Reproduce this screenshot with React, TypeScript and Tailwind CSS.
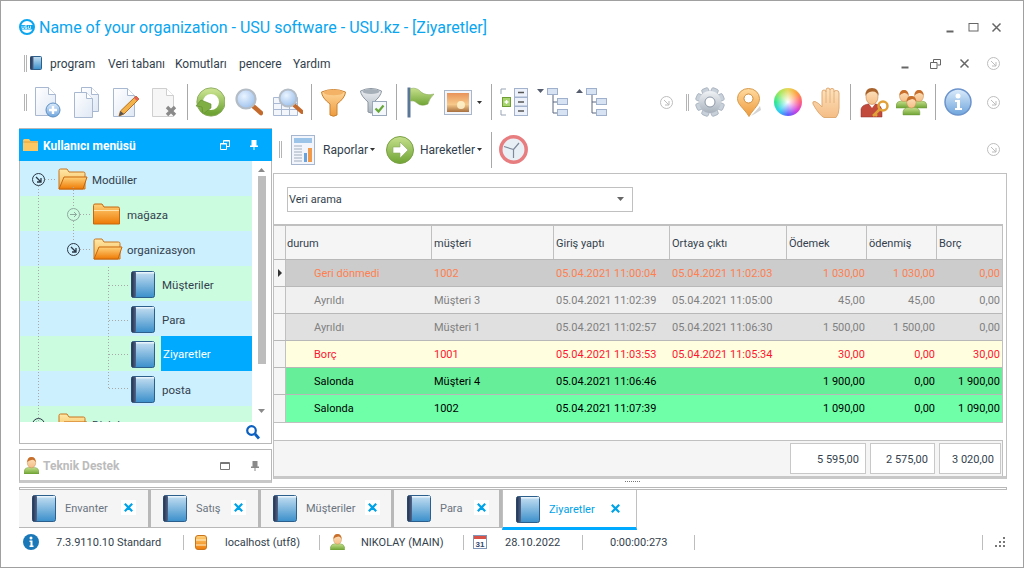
import React from "react";

const Defs = () => (
  <svg className="absolute w-0 h-0">
    <defs>
      <linearGradient id="book" x1="0" y1="0" x2="0" y2="1"><stop offset="0" stopColor="#c6e0f2" /><stop offset="1" stopColor="#3a8fcb" /></linearGradient>
      <linearGradient id="spine" x1="0" y1="0" x2="1" y2="0"><stop offset="0" stopColor="#22304d" /><stop offset="1" stopColor="#52668a" /></linearGradient>
      <linearGradient id="fold" x1="0" y1="0" x2="0" y2="1"><stop offset="0" stopColor="#ffd27a" /><stop offset="1" stopColor="#ee7a05" /></linearGradient>
      <linearGradient id="foldb" x1="0" y1="0" x2="0" y2="1"><stop offset="0" stopColor="#ffe9a8" /><stop offset="1" stopColor="#f3b14a" /></linearGradient>
      <linearGradient id="page" x1="0" y1="0" x2="1" y2="1"><stop offset="0" stopColor="#ffffff" /><stop offset="1" stopColor="#dfe8f5" /></linearGradient>
      <linearGradient id="green" x1="0" y1="0" x2="0" y2="1"><stop offset="0" stopColor="#c6e08c" /><stop offset="1" stopColor="#6fa435" /></linearGradient>
      <linearGradient id="orange" x1="0" y1="0" x2="0" y2="1"><stop offset="0" stopColor="#ffdba0" /><stop offset="1" stopColor="#ee9a3c" /></linearGradient>
      <linearGradient id="steel" x1="0" y1="0" x2="0" y2="1"><stop offset="0" stopColor="#f0f3f6" /><stop offset="1" stopColor="#a8b1bc" /></linearGradient>
      <linearGradient id="sky" x1="0" y1="0" x2="0" y2="1"><stop offset="0" stopColor="#dcecfb" /><stop offset="1" stopColor="#6fa5dd" /></linearGradient>
      <linearGradient id="sunset" x1="0" y1="0" x2="0" y2="1"><stop offset="0" stopColor="#e8935a" /><stop offset="0.6" stopColor="#f7c98a" /><stop offset="1" stopColor="#a8703f" /></linearGradient>
      <linearGradient id="skin" x1="0" y1="0" x2="0" y2="1"><stop offset="0" stopColor="#fde3c0" /><stop offset="1" stopColor="#f5bd85" /></linearGradient>
      <radialGradient id="lens" cx="0.4" cy="0.35" r="0.8"><stop offset="0" stopColor="#eaf4ff" /><stop offset="1" stopColor="#8fb8ea" /></radialGradient>
    </defs>
  </svg>
);

const Book = ({ className = "" }: { className?: string }) => (
  <svg className={`shrink-0 ${className}`} width="24" height="27" viewBox="0 0 24 27">
    <rect x="0.5" y="0.5" width="23" height="26" rx="2" fill="url(#book)" stroke="#2c5f8c" />
    <rect x="0.5" y="0.5" width="4.500" height="26" rx="1.500" fill="url(#spine)" />
    <rect x="5" y="1" width="18" height="1.500" fill="#e8f3fb" />
  </svg>
);

const FolderOpen = ({ className = "" }: { className?: string }) => (
  <svg className={`shrink-0 ${className}`} width="30" height="22" viewBox="0 0 30 22">
    <path d="M1 21V2.500Q1 1 2.500 1H9l2 3h14.500Q27 4 27 5.500V21Z" fill="url(#foldb)" stroke="#c8741c" />
    <path d="M1 21 6 9h23L25 21Z" fill="url(#fold)" stroke="#c8660c" />
  </svg>
);

const FolderClosed = ({ className = "" }: { className?: string }) => (
  <svg className={`shrink-0 ${className}`} width="27" height="22" viewBox="0 0 27 22">
    <path d="M0.500 21V2.500Q0.500 1 2 1H9l2 3h14Q26.500 4 26.500 5.500V21Z" fill="url(#fold)" stroke="#c8660c" />
    <path d="M1 7.500h25" stroke="#ffe3a8" />
  </svg>
);

const Arrow = ({ className = "", dark = false }: { className?: string; dark?: boolean }) => {
  const c = dark ? "#2a3644" : "#bdbdbd";
  return (
    <svg className={`shrink-0 ${className}`} width="13" height="13" viewBox="0 0 13 13" fill="none" stroke={c} strokeWidth="1">
      <circle cx="6.500" cy="6.500" r="6" />
      <path d="M4 4l5 5M9 5v4H5" strokeWidth={dark ? 1.300 : 1} />
    </svg>
  );
};

const Grip = ({ className = "" }: { className?: string }) => (
  <div className={`w-[3px] h-[17px] border-x border-[#b4b4b4] shrink-0 ${className}`} />
);

const PageBase = () => (
  <>
    <path d="M0.500 1.500h13l7 7v21h-20Z" fill="url(#page)" stroke="#a8b8d0" />
    <path d="M13.500 1.500v7h7" fill="#ffffff" stroke="#a8b8d0" />
  </>
);

const PagePlus = () => (
  <svg className="ml-[8px] shrink-0" width="26" height="32" viewBox="0 0 26 32">
    <PageBase />
    <circle cx="18" cy="24" r="7" fill="url(#sky)" stroke="#5d8fc2" />
    <path d="M18 20v8M14 24h8" stroke="#ffffff" strokeWidth="2.400" />
  </svg>
);

const PageCopy = () => (
  <svg className="ml-[13px] shrink-0" width="25" height="31" viewBox="0 0 25 31">
    <path d="M7.500 0.500h10l7 7v17h-17Z" fill="url(#page)" stroke="#a8b8d0" />
    <path d="M17.500 .5v7h7" fill="#fff" stroke="#a8b8d0" />
    <path d="M0.500 5.500h12l6 6v19h-18Z" fill="url(#page)" stroke="#a8b8d0" />
    <path d="M12.500 5.500v6h6" fill="#fff" stroke="#a8b8d0" />
  </svg>
);

const PagePencil = () => (
  <svg className="ml-[13px] shrink-0" width="28" height="31" viewBox="0 0 28 31">
    <path d="M1.500 1.500h14l7 7v21h-21Z" fill="url(#page)" stroke="#a8b8d0" />
    <path d="M15.500 1.500v7h7" fill="#fff" stroke="#a8b8d0" />
    <path d="M24 9 27 12 12 27l-5 2 1.500-5Z" fill="#f4b24a" stroke="#b9701a" />
    <path d="M7 29l1.500-5 3.500 3Z" fill="#555" />
    <path d="M24 9 27 12 25 14 22 11Z" fill="#e8605a" />
  </svg>
);

const PageDelete = () => (
  <svg className="ml-[12px] shrink-0" width="26" height="31" viewBox="0 0 26 31">
    <path d="M0.500 1.500h14l7 7v21h-21Z" fill="#f6f6f6" stroke="#cfcfcf" />
    <path d="M14.500 1.500v7h7" fill="#fff" stroke="#cfcfcf" />
    <path d="M15 20l8 8M23 20l-8 8" stroke="#8a8a8a" strokeWidth="3.400" />
  </svg>
);

const Refresh = () => (
  <svg className="ml-[7px] shrink-0" width="30" height="30" viewBox="0 0 30 30" fill="none">
    <circle cx="16" cy="15" r="11" stroke="url(#green)" strokeWidth="6" />
    <path d="M16 17 6 13 1 19l6 1 1 7 8-6Z" fill="#7eae44" stroke="#5d8a2c" strokeWidth="0.600" />
    <circle cx="16" cy="15" r="14.200" stroke="#7ea14c" strokeWidth="0.800" />
  </svg>
);

const Search = ({ className = "" }: { className?: string }) => (
  <svg className={className} width="28" height="28" viewBox="0 0 28 28">
    <path d="M18 18 26 25" stroke="#c46a2c" strokeWidth="4.500" strokeLinecap="round" />
    <circle cx="11" cy="11" r="9.500" fill="url(#lens)" stroke="#b4bcc6" strokeWidth="2.200" />
  </svg>
);

const TableSearch = () => (
  <svg className="ml-[10px] shrink-0" width="30" height="28" viewBox="0 0 30 28" fill="none">
    <path d="M0.500 9.500h24v18h-24Z" stroke="#a9b9d4" fill="#f3f6fb" />
    <path d="M0.500 15.500h24M0.500 21.500h24M8.500 9.500v18M16.500 9.500v18" stroke="#a9b9d4" />
    <path d="M21 17 29 24" stroke="#c46a2c" strokeWidth="4" strokeLinecap="round" />
    <circle cx="15" cy="10" r="8.500" fill="url(#lens)" stroke="#b4bcc6" strokeWidth="2" />
  </svg>
);

const Funnel = () => (
  <svg className="ml-[9px] shrink-0" width="25" height="29" viewBox="0 0 25 29">
    <path d="M0.500 4Q12.500 -1 24.500 4 24 10 16 16V27Q12.500 29.500 9 27V16Q1 10 .5 4Z" fill="url(#orange)" stroke="#c98130" />
    <ellipse cx="12.500" cy="4.500" rx="10" ry="2.800" fill="#f3b266" />
  </svg>
);

const FunnelCheck = () => (
  <svg className="ml-[14px] shrink-0" width="27" height="30" viewBox="0 0 27 30">
    <path d="M0.500 4Q11 -1 21.500 4 21 9 14 15V25Q11 27 8 25V15Q1 9 .5 4Z" fill="url(#steel)" stroke="#8b959f" />
    <ellipse cx="11" cy="4.500" rx="8.500" ry="2.500" fill="#a6afb8" />
    <rect x="12.500" y="14.500" width="14" height="14" fill="#f4f7fb" stroke="#9aa8bc" />
    <path d="M15.500 21.500l3 3 5-6" fill="none" stroke="#68a83a" strokeWidth="2.200" />
  </svg>
);

const Flag = () => (
  <svg className="ml-[10px] shrink-0" width="27" height="31" viewBox="0 0 27 31">
    <rect x="0.500" y="0.500" width="3" height="30" fill="#5b7798" />
    <path d="M3.500 1.500Q10 0 14 5 19 9 27 7 22 12 21 17 14 20 10 16 7 13 3.500 14Z" fill="url(#green)" stroke="#7ea14c" strokeWidth="0.500" />
  </svg>
);

const ImageIcon = () => (
  <svg className="ml-[10px] shrink-0" width="28" height="25" viewBox="0 0 28 25">
    <rect x="0.500" y="0.500" width="27" height="24" fill="#f2f5fa" stroke="#a9b5c9" />
    <rect x="3" y="3" width="22" height="19" fill="url(#sunset)" />
    <circle cx="17" cy="15" r="4" fill="#fff4cf" opacity="0.850" />
  </svg>
);

const Caret = ({ className = "" }: { className?: string }) => (
  <svg className={`shrink-0 ${className}`} width="5" height="3" viewBox="0 0 5 3"><path d="M0 0h5L2.500 3Z" fill="#333" /></svg>
);

const Separator = ({ className = "" }: { className?: string }) => (
  <div className={`w-[1px] h-[36px] bg-[#a8a8a8] shrink-0 ${className}`} />
);

const ListIcon = () => (
  <svg className="ml-[8px] shrink-0" width="28" height="28" viewBox="0 0 28 28" fill="none">
    <path d="M1 6V1h5M1 22v5h5" stroke="#9aa5b5" />
    <rect x="2.500" y="9.500" width="8" height="9" fill="#a8d46f" stroke="#6f9e35" />
    <path d="M4.500 14h4M6.500 12v4" stroke="#fff" strokeWidth="1.400" />
    <rect x="14.500" y="0.500" width="13" height="8.500" fill="#edf2fa" stroke="#a3b2cd" />
    <rect x="14.500" y="9.500" width="13" height="8.500" fill="#edf2fa" stroke="#a3b2cd" />
    <rect x="14.500" y="18.500" width="13" height="9" fill="#edf2fa" stroke="#a3b2cd" />
    <path d="M18 4.500h6M18 14h6M18 23h6" stroke="#555" strokeWidth="1.400" />
  </svg>
);

const TreeIcon = ({ up = false, className = "" }: { up?: boolean; className?: string }) => (
  <svg className={className} width="31" height="28" viewBox="0 0 31 28" fill="none">
    <path d={up ? "M0 5h7L3.500 1Z" : "M0 1h7L3.500 5Z"} fill="#555c6e" />
    <path d="M16 6v19h5M16 14h5" stroke="#5c6780" />
    <rect x="10.500" y="0.500" width="10" height="6" fill="#d7e2f2" stroke="#9fb0cc" />
    <rect x="20.500" y="10.500" width="10" height="6" fill="#d7e2f2" stroke="#9fb0cc" />
    <rect x="20.500" y="21.500" width="10" height="6" fill="#d7e2f2" stroke="#9fb0cc" />
  </svg>
);

const Gear = () => (
  <svg className="ml-[6px] shrink-0" width="30" height="30" viewBox="0 0 30 30">
    {[22.500, 67.500, 112.500, 157.500].map((a) => (
      <rect key={a} x="11.500" y="0.500" width="7" height="29" rx="1.500" fill="#c8d0d9" stroke="#95a1af" strokeWidth="0.600" transform={`rotate(${a} 15 15)`} />
    ))}
    <circle cx="15" cy="15" r="11" fill="url(#steel)" />
    <circle cx="15" cy="15" r="5" fill="#ffffff" stroke="#8d98a6" />
  </svg>
);

const Pin = () => (
  <svg className="ml-[12px] shrink-0" width="24" height="29" viewBox="0 0 24 29">
    <path d="M14 28Q18 24 23 18L24 22Q18 26 14 28Z" fill="#b8b8b8" opacity="0.600" />
    <path d="M12 28.500C7 20 .5 17 .5 10.500a11 10 0 0 1 22 0C22.500 17 17 20 12 28.500Z" fill="url(#orange)" stroke="#d69a4a" />
    <circle cx="11.500" cy="10.500" r="4.500" fill="#fff" stroke="#cf8b3a" />
  </svg>
);

const Wheel = () => (
  <div className="ml-[13px] shrink-0 w-[28px] h-[28px] rounded-full bg-[image:radial-gradient(circle,#ffffff_0%,#ffffffaa_20%,#ffffff00_62%),conic-gradient(#e8d85a,#ffa040,#ff6080,#d040e0,#6060ff,#30d0f0,#30e890,#a0e860,#e8d85a)]" />
);

const Hand = () => (
  <svg className="ml-[10px] shrink-0" width="29" height="31" viewBox="0 0 29 31">
    <path d="M12 30.500Q7 28 1 17Q0 14 3 14.500Q7 16 10 20V5Q10 3 12 3T14 5V3Q14 1 16 1T18 3V3Q18 1.500 20 1.500T22 3V5Q22 3.500 24.500 3.500T27 6V21Q27 27 24 30.500Z" fill="url(#skin)" stroke="#e0ab72" />
    <path d="M14 5v11M18 3v13M22 5v11" stroke="#e0ab72" strokeWidth="0.800" />
  </svg>
);

const UserKey = () => (
  <svg className="ml-[9px] shrink-0" width="29" height="31" viewBox="0 0 29 31">
    <path d="M1 30V22Q2 18 8 17H16Q21 18 22 23V30Z" fill="#c24a3c" stroke="#8a2f28" strokeWidth="0.500" />
    <path d="M9 17l3 4 3-4Z" fill="#fff" />
    <ellipse cx="12" cy="10" rx="6" ry="7.500" fill="url(#skin)" stroke="#b8743a" strokeWidth="0.500" />
    <path d="M5.500 9Q5 1 12 1T18.500 9Q17 4 12 4.500T5.500 9Z" fill="#a8622c" />
    <circle cx="23" cy="19" r="4.500" fill="none" stroke="#e0a238" strokeWidth="2.500" />
    <path d="M20 22 13 29M15 27l2 2" stroke="#e0a238" strokeWidth="2.500" />
  </svg>
);

const Person = ({ x, y, s = 1 }: { x: number; y: number; s?: number }) => (
  <g transform={`translate(${x} ${y}) scale(${s})`}>
    <path d="M0 18V15Q1 11 5 11H11Q15 11 16 15V18Z" fill="url(#green)" stroke="#6f9a3c" strokeWidth="0.500" />
    <ellipse cx="8" cy="6" rx="4.500" ry="5.500" fill="url(#skin)" stroke="#c68c4c" strokeWidth="0.500" />
    <path d="M3.500 5.500Q3.500 0 8 0T12.500 5.500Q11 2.500 8 3T3.500 5.500Z" fill="#c86f2c" />
  </g>
);

const Users = () => (
  <svg className="ml-[7px] shrink-0" width="31" height="28" viewBox="0 0 31 28">
    <Person x={0} y={2} />
    <Person x={15} y={2} />
    <Person x={7} y={8} s={1.050} />
  </svg>
);

const InfoBig = () => (
  <svg className="ml-[8px] shrink-0" width="28" height="28" viewBox="0 0 28 28">
    <circle cx="14" cy="14" r="13" fill="url(#sky)" stroke="#6b93cc" strokeWidth="1.500" />
    <circle cx="14" cy="8" r="2.500" fill="#fff" />
    <path d="M11 12h5v8h2v2h-7v-2h2v-6h-2Z" fill="#fff" />
  </svg>
);

const Chrome = ({ kind }: { kind: "min" | "max" | "restore" | "close" }) => (
  <svg width="11" height="11" viewBox="0 0 11 11" fill="none" stroke="#666" className="shrink-0">
    {kind === "min" && <path d="M1.500 9.500h7" strokeWidth="2" />}
    {kind === "max" && <rect x="1" y="1.500" width="9" height="7.500" strokeWidth="1" />}
    {kind === "restore" && <path d="M0.500 4.500h6.500v6h-6.500ZM3.500 4V1.500h7v5.500h-3" />}
    {kind === "close" && <path d="M1.500 1.500l8 8M9.500 1.500l-8 8" strokeWidth="1.500" />}
  </svg>
);

const Expander = ({ faded = false }: { faded?: boolean }) =>
  faded ? (
    <svg width="13" height="13" viewBox="0 0 13 13" fill="none" stroke="#8da89c" strokeWidth="1" className="shrink-0">
      <circle cx="6.500" cy="6.500" r="6" />
      <path d="M3 6.500h6.500M7 4l2.500 2.500L7 9" />
    </svg>
  ) : (
    <Arrow dark />
  );

const TreeLines = () => (
  <svg className="absolute left-0 top-0 pointer-events-none" width="232" height="261" fill="none" stroke="#a8a8a8" strokeDasharray="1 2">
    <path d="M18.500 25V261M25 18.500h11M53.500 26V46M53.500 60V81M60 53.500h12M60 88.500h12M88.500 106V227.500M89 124.500h21M89 159.500h21M89 193.500h21M89 227.500h21" />
  </svg>
);

const TreeRow = ({ bg, children }: { bg: string; children: React.ReactNode }) => (
  <div className={`h-[35px] flex items-center shrink-0 pt-[1px] ${bg}`}>{children}</div>
);

const Tree = () => (
  <div className="relative flex-1 flex flex-col overflow-hidden text-[11.500px] text-[#333f4d] [&_span]:pt-[3px]">
    <TreeRow bg="bg-[#cdf0ff]">
      <div className="ml-[12px]"><Expander /></div>
      <FolderOpen className="ml-[13px]" />
      <span className="ml-[4px]">Modüller</span>
    </TreeRow>
    <TreeRow bg="bg-[#ccfce0]">
      <div className="ml-[47px]"><Expander faded /></div>
      <FolderClosed className="ml-[13px]" />
      <span className="ml-[7px]">mağaza</span>
    </TreeRow>
    <TreeRow bg="bg-[#cdf0ff]">
      <div className="ml-[47px]"><Expander /></div>
      <FolderOpen className="ml-[13px]" />
      <span className="ml-[4px]">organizasyon</span>
    </TreeRow>
    <TreeRow bg="bg-[#ccfce0]">
      <Book className="ml-[111px]" />
      <span className="ml-[7px]">Müşteriler</span>
    </TreeRow>
    <TreeRow bg="bg-[#cdf0ff]">
      <Book className="ml-[111px]" />
      <span className="ml-[7px]">Para</span>
    </TreeRow>
    <TreeRow bg="bg-[#ccfce0]">
      <Book className="ml-[111px]" />
      <span className="ml-[6px] flex-1 self-stretch -mt-[1px] flex items-center pl-[2px] bg-[#00aaff] text-white">Ziyaretler</span>
    </TreeRow>
    <TreeRow bg="bg-[#cdf0ff]">
      <Book className="ml-[111px]" />
      <span className="ml-[7px]">posta</span>
    </TreeRow>
    <TreeRow bg="bg-[#ccfce0]">
      <div className="ml-[12px]"><Expander /></div>
      <FolderOpen className="ml-[13px]" />
      <span className="ml-[4px]">Dizinler</span>
    </TreeRow>
    <TreeLines />
  </div>
);

const LeftPanel = () => (
  <div className="ml-[18px] w-[253px] shrink-0 flex flex-col">
    <div className="h-[1px] bg-[#b8b8b8]" />
    <div className="h-[32px] bg-[#00aaff] flex items-center text-white font-bold text-[12px] shrink-0">
      <svg className="ml-[4px]" width="15" height="12" viewBox="0 0 15 12">
        <path d="M0 12V1.500Q0 0 1.500 0H6l1.500 2H15V12Z" fill="#fbc864" />
        <path d="M0 3h15" stroke="#e0a23c" />
      </svg>
      <span className="ml-[5px] pt-[2px]">Kullanıcı menüsü</span>
      <div className="ml-auto mr-[14px] flex items-center gap-[20px]">
        <svg width="10" height="10" viewBox="0 0 10 10" fill="none" stroke="#fff"><path d="M0.500 3.500h6v6h-6ZM3.500 3V.5h6v6H7" /><path d="M.5 4h6M3.500 1h6" /></svg>
        <svg width="8" height="10" viewBox="0 0 8 10" fill="#fff"><path d="M1.500 0h5v5.500H8V7H4.500v3h-1V7H0V5.500h1.500Z" /></svg>
      </div>
    </div>
    <div className="h-[283px] border-x border-b border-[#b8b8b8] flex flex-col bg-white shrink-0">
      <div className="h-[261px] flex shrink-0">
        <Tree />
        <div className="w-[19px] shrink-0 flex flex-col items-center relative">
          <svg className="mt-[7px]" width="7" height="4" viewBox="0 0 7 4"><path d="M0 4h7L3.500 0Z" fill="#8a8a8a" /></svg>
          <div className="mt-[4px] w-[8px] h-[188px] bg-[#bdbdbd]" />
          <svg className="mt-[45px]" width="7" height="4" viewBox="0 0 7 4"><path d="M0 0h7L3.500 4Z" fill="#8a8a8a" /></svg>
        </div>
      </div>
      <div className="flex-1 flex items-center justify-end pr-[11px]">
        <svg width="14" height="15" viewBox="0 0 14 15" fill="none" stroke="#0a5fc0"><circle cx="5.500" cy="5.500" r="4.300" strokeWidth="2.200" /><path d="M9 9l4 4.500" strokeWidth="2.800" /></svg>
      </div>
    </div>
    <div className="mt-[5px] h-[34px] border border-[#b8b8b8] border-b-[3px] border-b-[#c8c8c8] flex items-center shrink-0 pt-[1px]">
      <svg className="ml-[4px]" width="15" height="17" viewBox="0 0 16 18"><Person x={0} y={0} /></svg>
      <span className="ml-[4px] text-[12px] font-bold text-[#bcbcbc]">Teknik Destek</span>
      <div className="ml-auto mr-[12px] flex items-center gap-[21px]">
        <svg width="10" height="8" viewBox="0 0 10 8" fill="none" stroke="#777"><path d="M.5 .5h9v7h-9ZM.5 1.500h9" /></svg>
        <svg width="8" height="10" viewBox="0 0 8 10" fill="#8a8a8a"><path d="M1.500 0h5v5.500H8V7H4.500v3h-1V7H0V5.500h1.500Z" /></svg>
      </div>
    </div>
  </div>
);

type Row = { bg: string; color: string; c: string[] };
const rows: Row[] = [
  { bg: "bg-[#cccccc]", color: "text-[#ff7f50]", c: ["Geri dönmedi", "1002", "05.04.2021 11:00:04", "05.04.2021 11:02:03", "1 030,00", "1 030,00", "0,00"] },
  { bg: "bg-[#f0f0f0]", color: "text-[#808080]", c: ["Ayrıldı", "Müşteri 3", "05.04.2021 11:02:39", "05.04.2021 11:05:00", "45,00", "45,00", "0,00"] },
  { bg: "bg-[#e0e0e0]", color: "text-[#808080]", c: ["Ayrıldı", "Müşteri 1", "05.04.2021 11:02:57", "05.04.2021 11:06:30", "1 500,00", "1 500,00", "0,00"] },
  { bg: "bg-[#ffffe0]", color: "text-[#ff1430]", c: ["Borç", "1001", "05.04.2021 11:03:53", "05.04.2021 11:05:34", "30,00", "0,00", "30,00"] },
  { bg: "bg-[#66ee99]", color: "text-black", c: ["Salonda", "Müşteri 4", "05.04.2021 11:06:46", "", "1 900,00", "0,00", "1 900,00"] },
  { bg: "bg-[#6fffa8]", color: "text-black", c: ["Salonda", "1002", "05.04.2021 11:07:39", "", "1 090,00", "0,00", "1 090,00"] },
];

const colClass = ["w-[146px]", "w-[122px]", "w-[116px]", "w-[117px]", "w-[80px]", "w-[70px]", "w-[65px]"];
const headers = ["durum", "müşteri", "Giriş yaptı", "Ortaya çıktı", "Ödemek", "ödenmiş", "Borç"];

const Grid = () => (
  <div className="w-[729px] border-t-2 border-r border-b border-[#c0c0c0] text-[11px] flex flex-col shrink-0">
    <div className="h-[34px] flex bg-[#f5f5f5] border-b border-[#b8b8b8] text-[#333f4d]">
      <div className="w-[12px] border-r border-[#c0c0c0] shrink-0" />
      {headers.map((h, i) => (
        <div key={h} className={`${colClass[i]} shrink-0 flex items-center pt-[3px] ${i === 0 ? "pl-[1px]" : "pl-[2px]"} ${i < 6 ? "border-r border-[#c0c0c0]" : ""}`}>{h}</div>
      ))}
    </div>
    {rows.map((r, ri) => (
      <div key={ri} className={`h-[27px] flex ${ri === 5 ? "" : "border-b border-[#b8b8b8]"} ${r.bg} ${r.color}`}>
        <div className="w-[12px] bg-[#f5f5f5] border-r border-[#c0c0c0] flex items-center justify-center shrink-0">
          {ri === 0 && <svg width="4" height="8" viewBox="0 0 4 8"><path d="M0 0l4 4-4 4Z" fill="#333" /></svg>}
        </div>
        {r.c.map((v, i) => (
          <div key={i} className={`${colClass[i]} shrink-0 flex items-center pt-[2px] ${i === 0 ? "pl-[28px]" : i >= 4 ? "justify-end pr-[2px]" : "pl-[2px]"}`}>{v}</div>
        ))}
      </div>
    ))}
  </div>
);

const Total = ({ w, v }: { w: string; v: string }) => (
  <div className={`${w} h-[31px] bg-white border border-[#c8c8c8] flex items-center justify-end pr-[6px] pt-[3px] text-[#333f4d] shrink-0`}>{v}</div>
);

const RightPanel = () => (
  <div className="ml-[1px] w-[734px] shrink-0 flex flex-col">
    <div className="h-[45px] flex items-center text-[12px] text-[#333f4d] shrink-0 pb-[2px]">
      <Grip className="ml-[6px]" />
      <svg className="ml-[9px] shrink-0" width="24" height="30" viewBox="0 0 24 30">
        <rect x=".5" y=".5" width="23" height="29" fill="#f2f6fc" stroke="#a7b6cf" />
        <rect x="3" y="3" width="18" height="5" fill="#9cc4e8" />
        <path d="M3 11h8M3 14h8M3 17h8M3 20h8M3 23h8M3 26h8" stroke="#a0acbd" />
        <rect x="13" y="18" width="3" height="9" fill="#6aa2dc" />
        <rect x="17" y="13" width="4" height="14" fill="#f09a4a" />
      </svg>
      <span className="ml-[8px] w-[46px] shrink-0">Raporlar</span>
      <Caret className="ml-[1px]" />
      <svg className="ml-[11px] shrink-0" width="28" height="28" viewBox="0 0 28 28">
        <circle cx="14" cy="14" r="13.500" fill="url(#green)" stroke="#7a9f45" />
        <path d="M7 11h7V6l8 8-8 8v-5H7Z" fill="#fff" stroke="#8aa860" strokeWidth=".6" />
      </svg>
      <span className="ml-[6px] w-[56px] shrink-0">Hareketler</span>
      <Caret className="ml-[1px]" />
      <Separator className="ml-[9px]" />
      <svg className="ml-[7px] shrink-0" width="29" height="29" viewBox="0 0 29 29" fill="none">
        <circle cx="14.500" cy="14.500" r="12.700" fill="#e9f0f5" stroke="#e87d80" strokeWidth="3.500" />
        <path d="M14.500 14.500 20 8M14.500 14.500 5 11.500M14.500 14.500V23" stroke="#7e8a9c" strokeWidth="1.200" />
      </svg>
      <Arrow className="ml-auto mr-[7px]" />
    </div>
    <div className="h-[306px] border-t border-r border-l border-[#c0c0c0] border-b-[3px] border-b-[#c8c8c8] flex flex-col shrink-0">
      <div className="h-[50px] flex items-center pl-[13px] shrink-0">
        <div className="w-[346px] h-[25px] border border-[#c0c0c0] flex items-center pl-[1px] pr-[8px] text-[11px] text-[#333f4d]">
          <span className="pt-[2px]">Veri arama</span>
          <svg className="ml-auto" width="7" height="4" viewBox="0 0 7 4"><path d="M0 0h7L3.500 4Z" fill="#666" /></svg>
        </div>
      </div>
      <Grid />
      <div className="flex-1" />
      <div className="h-[36px] bg-[#f5f5f5] border-t border-[#c0c0c0] border-r w-[729px] flex items-center justify-end gap-[4px] pr-[1px] text-[11px] shrink-0">
        <Total w="w-[76px]" v="5 595,00" />
        <Total w="w-[65px]" v="2 575,00" />
        <Total w="w-[62px]" v="3 020,00" />
      </div>
    </div>
    <div className="h-[8px] flex items-start justify-center pt-[2px] shrink-0 relative left-[-8px]">
      <div className="w-[15px] border-t border-dotted border-[#777]" />
    </div>
  </div>
);

const Tab = ({ w, ml, mr, label, active = false }: { w: string; ml: string; mr: string; label: string; active?: boolean }) => (
  <div className={`${w} shrink-0 flex items-center text-[11px] ${active ? "h-[42px] pt-[3px] bg-white border-x border-[#c0c0c0] border-b-[3px] border-b-[#00aaff] text-[#00a2e8]" : "h-[40px] pt-[1px] bg-[#f5f5f5] border-r-[3px] border-r-[#b8b8b8] border-b border-b-[#b8b8b8] text-[#6a7480]"}`}>
    <Book className={ml} />
    <span className="ml-[9px] flex-1 pt-[2px]">{label}</span>
    <div className={`w-[15px] h-[15px] flex items-center justify-center bg-white -mt-[1px] ${mr}`}>
      <svg width="9" height="9" viewBox="0 0 9 9" fill="none" stroke="#00a2e8" strokeWidth="2.200"><path d="M.8 .8l7.400 7.400M8.200 .8.8 8.200" /></svg>
    </div>
  </div>
);

const StatusSep = ({ className = "" }: { className?: string }) => <div className={`w-[1px] h-[15px] bg-[#bdbdbd] shrink-0 ${className}`} />;

const App = () => (
  <div className="relative w-[1024px] h-[568px] bg-white border border-[#a0a0a0] overflow-hidden flex flex-col font-['Roboto','Liberation_Sans',sans-serif]">
    <Defs />
    <div className="h-[52px] flex items-center shrink-0">
      <svg className="ml-[18px]" width="16" height="16" viewBox="0 0 16 16" fill="none">
        <circle cx="8" cy="8" r="7" stroke="#0aa6f0" strokeWidth="2" />
        <rect x="1" y="6" width="14" height="4.500" fill="#0aa6f0" />
        <path d="M3 6.800V9.500h2V6.800M6 9.500h2V8.200H6V6.800h2M9.500 6.800V9.500h2V6.800" stroke="#fff" strokeWidth=".7" />
      </svg>
      <span className="ml-[4px] pt-[2px] text-[16px] text-[#0aa6f0]">Name of your organization - USU software - USU.kz - [Ziyaretler]</span>
      <div className="ml-auto mr-[21px] flex items-center gap-[12px]">
        <Chrome kind="min" />
        <Chrome kind="max" />
        <Chrome kind="close" />
      </div>
    </div>
    <div className="h-[20px] flex items-center text-[12px] text-[#333f4d] shrink-0 [&_span]:pt-[2px]">
      <Grip className="ml-[23px]" />
      <svg className="ml-[3px] shrink-0" width="12" height="14" viewBox="0 0 12 14">
        <rect x=".5" y=".5" width="11" height="13" rx="1" fill="url(#book)" stroke="#2c5f8c" />
        <rect x=".5" y=".5" width="3" height="13" fill="url(#spine)" />
      </svg>
      <span className="ml-[8px] w-[58px] shrink-0">program</span>
      <span className="w-[67px] shrink-0">Veri tabanı</span>
      <span className="w-[64px] shrink-0">Komutları</span>
      <span className="w-[54px] shrink-0">pencere</span>
      <span className="shrink-0">Yardım</span>
      <div className="ml-auto mr-[23px] flex items-center">
        <Chrome kind="min" />
        <div className="ml-[19px]"><Chrome kind="restore" /></div>
        <div className="ml-[18px]"><Chrome kind="close" /></div>
        <Arrow className="ml-[17px]" />
      </div>
    </div>
    <div className="mt-[11px] h-[36px] flex items-center shrink-0">
      <Grip className="ml-[23px]" />
      <PagePlus />
      <PageCopy />
      <PagePencil />
      <PageDelete />
      <Separator className="ml-[9px]" />
      <Refresh />
      <Search className="ml-[10px] shrink-0" />
      <TableSearch />
      <Separator className="ml-[8px]" />
      <Funnel />
      <FunnelCheck />
      <Separator className="ml-[9px]" />
      <Flag />
      <ImageIcon />
      <Caret className="ml-[5px]" />
      <Separator className="ml-[9px]" />
      <ListIcon />
      <TreeIcon className="ml-[9px] shrink-0" />
      <TreeIcon up className="ml-[8px] shrink-0" />
      <Arrow className="ml-[53px]" />
      <Grip className="ml-[13px]" />
      <Gear />
      <Pin />
      <Wheel />
      <Hand />
      <Separator className="ml-[9px]" />
      <UserKey />
      <Users />
      <Separator className="ml-[8px]" />
      <InfoBig />
      <Arrow className="ml-[15px]" />
    </div>
    <div className="mt-[8px] h-[359px] flex shrink-0">
      <LeftPanel />
      <RightPanel />
    </div>
    <div className="relative z-10 ml-[18px] w-[988px] h-[3px] border border-[#b8b8b8] bg-white shrink-0 -mb-[2px]" />
    <div className="ml-[18px] flex items-start h-[40px] shrink-0">
      <Tab w="w-[132px]" ml="ml-[13px]" mr="mr-[12px]" label="Envanter" />
      <Tab w="w-[110px]" ml="ml-[12px]" mr="mr-[12px]" label="Satış" />
      <Tab w="w-[133px]" ml="ml-[12px]" mr="mr-[11px]" label="Müşteriler" />
      <Tab w="w-[108px]" ml="ml-[13px]" mr="mr-[10px]" label="Para" />
      <Tab w="w-[135px]" ml="ml-[13px]" mr="mr-[13px]" label="Ziyaretler" active />
    </div>
    <div className="flex-1 flex items-center text-[11px] text-[#333f4d] pb-[11px] [&_span]:pt-[2px]">
      <svg className="ml-[22px] shrink-0" width="16" height="16" viewBox="0 0 16 16">
        <circle cx="8" cy="8" r="8" fill="#1a78b8" />
        <circle cx="8" cy="4" r="1.500" fill="#fff" />
        <path d="M6.500 6.500h3v5h1V13h-4v-1.500h1V8h-1Z" fill="#fff" />
      </svg>
      <span className="ml-[17px] w-[127px] shrink-0">7.3.9110.10 Standard</span>
      <StatusSep />
      <svg className="ml-[11px] shrink-0" width="12" height="15" viewBox="0 0 12 15">
        <rect x=".5" y=".5" width="11" height="14" rx="2.500" fill="url(#fold)" stroke="#c8741c" />
        <path d="M1 5h10M1 10h10" stroke="#fff3cf" />
      </svg>
      <span className="ml-[18px] w-[94px] shrink-0">localhost (utf8)</span>
      <StatusSep />
      <svg className="ml-[10px] shrink-0" width="15" height="16" viewBox="0 0 16 18"><Person x={0} y={0} /></svg>
      <span className="ml-[16px] w-[102px] shrink-0">NIKOLAY (MAIN)</span>
      <StatusSep />
      <svg className="ml-[9px] shrink-0" width="14" height="14" viewBox="0 0 14 14">
        <rect x=".5" y=".5" width="13" height="13" fill="#fff" stroke="#8096b8" />
        <rect x="1" y="1" width="12" height="3" fill="#d8524a" />
        <text x="7" y="12" textAnchor="middle" fontSize="8" fontWeight="700" fill="#33476b" fontFamily="Liberation Sans">31</text>
      </svg>
      <span className="ml-[18px] w-[77px] shrink-0">28.10.2022</span>
      <StatusSep />
      <span className="ml-[27px] w-[84px] shrink-0">0:00:00:273</span>
      <StatusSep />
      <StatusSep className="ml-[287px]" />
      <svg className="ml-[11px] shrink-0" width="12" height="12" viewBox="0 0 12 12" fill="#777">
        <rect x="9" y="1" width="2" height="2" /><rect x="5" y="5" width="2" height="2" /><rect x="9" y="5" width="2" height="2" /><rect x="1" y="9" width="2" height="2" /><rect x="5" y="9" width="2" height="2" /><rect x="9" y="9" width="2" height="2" />
      </svg>
    </div>
  </div>
);

export default App;
